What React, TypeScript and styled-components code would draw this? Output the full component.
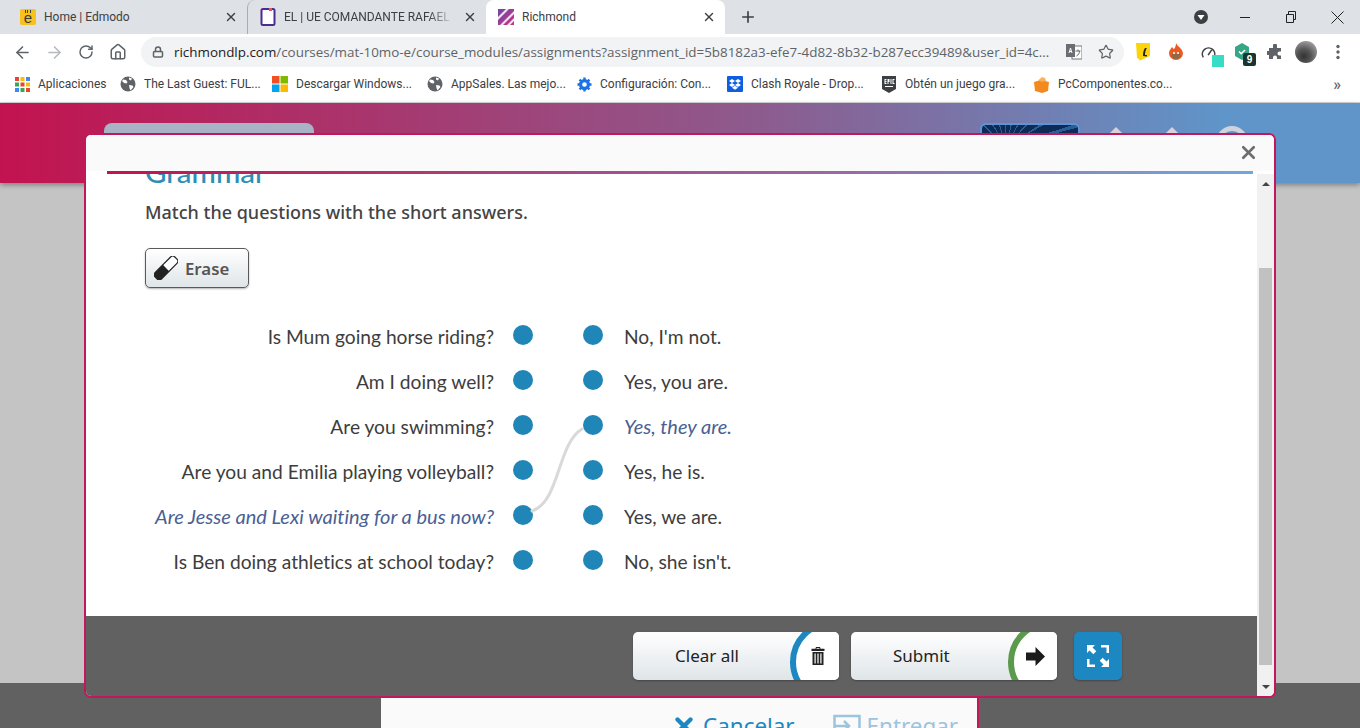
import React from 'react';
import styled, { createGlobalStyle } from 'styled-components';
import { ArrowLeft, ArrowRight, House, Lock, Plus, RotateCw, Star, X } from 'lucide-react';

const GlobalStyle = createGlobalStyle`
  html, body {
    margin: 0;
    padding: 0;
    height: 100%;
    overflow: hidden;
  }
  * {
    box-sizing: border-box;
  }
`;

const chromeFont = `Roboto, "Open Sans", sans-serif`;
const bodyFont = `Lato, "Open Sans", sans-serif`;
const uiFont = `"Noto Sans", "Open Sans", sans-serif`;

const questions = [
  { text: 'Is Mum going horse riding?' },
  { text: 'Am I doing well?' },
  { text: 'Are you swimming?' },
  { text: 'Are you and Emilia playing volleyball?' },
  { text: 'Are Jesse and Lexi waiting for a bus now?', picked: true },
  { text: 'Is Ben doing athletics at school today?' },
];

const answers = [
  { text: "No, I'm not." },
  { text: 'Yes, you are.' },
  { text: 'Yes, they are.', picked: true },
  { text: 'Yes, he is.' },
  { text: 'Yes, we are.' },
  { text: "No, she isn't." },
];

const bookmarks = [
  { label: 'The Last Guest: FUL...', icon: 'globe', width: 152 },
  { label: 'Descargar Windows...', icon: 'windows', width: 155 },
  { label: 'AppSales. Las mejo...', icon: 'globe', width: 150 },
  { label: 'Configuración: Con...', icon: 'gear', width: 150 },
  { label: 'Clash Royale - Drop...', icon: 'dropbox', width: 154 },
  { label: 'Obtén un juego gra...', icon: 'epic', width: 152 },
  { label: 'PcComponentes.co...', icon: 'pc', width: 152 },
];

const BookmarkIcon: React.FC<{ kind: string }> = ({ kind }) => {
  if (kind === 'globe') {
    return (
      <svg width="16" height="16" viewBox="0 0 16 16">
        <circle cx="8" cy="8" r="7.5" fill="#5f6368" />
        <path d="M3 3.5l3 .5 1.5 2-1 1.5-2.500-.5-2-2zM9 9l3.500.5 1 1.500-3 3.500-1-2.500zM9 1.500l3 1-1 2-2-1z" fill="#fff" />
      </svg>
    );
  }
  if (kind === 'windows') {
    return (
      <svg width="16" height="16" viewBox="0 0 16 16">
        <rect width="7.500" height="7.500" fill="#f25022" />
        <rect x="8.500" width="7.500" height="7.500" fill="#7fba00" />
        <rect y="8.500" width="7.500" height="7.500" fill="#00a4ef" />
        <rect x="8.500" y="8.500" width="7.500" height="7.500" fill="#ffb900" />
      </svg>
    );
  }
  if (kind === 'gear') {
    return (
      <svg width="15" height="15" viewBox="0 0 16 16">
        <circle cx="8" cy="8" r="4.200" fill="none" stroke="#1a73e8" strokeWidth="3.400" />
        <path d="M8 .5v3M8 12.500v3M.5 8h3M12.500 8h3M2.700 2.700l2.100 2.100M11.200 11.200l2.100 2.100M2.700 13.300l2.100-2.100M11.200 4.800l2.100-2.100" stroke="#1a73e8" strokeWidth="2.600" />
      </svg>
    );
  }
  if (kind === 'dropbox') {
    return (
      <svg width="16" height="16" viewBox="0 0 16 16">
        <rect width="16" height="16" rx="1" fill="#0d5fe0" />
        <path d="M5 3l3 2-3 2-3-2zM11 3l3 2-3 2-3-2zM5 7l3 2-3 2-3-2zM11 7l3 2-3 2-3-2zM5 11.700l3-2 3 2-3 2z" fill="#fff" />
      </svg>
    );
  }
  if (kind === 'epic') {
    return (
      <svg width="16" height="17" viewBox="0 0 16 17">
        <path d="M1 0h14v13l-7 4-7-4z" fill="#3c4043" />
        <path d="M3.500 3h2v1h-1v1h1v1h-1v1h1v1h-2zM6.500 3h2v3h-1v2h-1zM9.500 3h1v5h-1zM11.500 3h2v1h-1v3h1v1h-2zM4 10h8v1H4z" fill="#fff" />
      </svg>
    );
  }
  return (
    <svg width="17" height="17" viewBox="0 0 17 17">
      <path d="M1 6l7-2 8 2-1 9-6 2-7-2z" fill="#f28a1e" />
      <path d="M5 4.500L9 1l3 1 1 3-4.500.8z" fill="#f9b15c" />
    </svg>
  );
};

const AppsGrid: React.FC = () => {
  const colours = ['#ea4335', '#fbbc04', '#4285f4', '#34a853', '#ea4335', '#fbbc04', '#4285f4', '#34a853', '#ea4335'];
  return (
    <svg width="15" height="15" viewBox="0 0 15 15">
      {colours.map((c, i) => (
        <rect key={i} x={(i % 3) * 5.5} y={Math.floor(i / 3) * 5.5} width="4" height="4" fill={c} />
      ))}
    </svg>
  );
};

const EraserIcon: React.FC = () => (
  <svg width="24" height="24" viewBox="0 0 24 24">
    <g transform="rotate(45 12 12)">
      <rect x="7.500" y="-2" width="9" height="28" rx="3" fill="#fff" stroke="#222" strokeWidth="1.200" />
      <path d="M7.500 12h9v11a3 3 0 0 1-3 3h-3a3 3 0 0 1-3-3z" fill="#222" />
    </g>
  </svg>
);

const TrashIcon: React.FC = () => (
  <svg width="14" height="18" viewBox="0 0 14 18">
    <path d="M5 0h4l.6 1.800H13.500V4H.5V1.800H4.400zM5.600.9l-.2.9h3.200L8.400.900z" fill="#222" fillRule="evenodd" />
    <path d="M1.500 5h11v13h-11zM3.500 6.500v10h1.200v-10zM6.400 6.500v10h1.200v-10zM9.300 6.500v10h1.200v-10z" fill="#222" fillRule="evenodd" />
  </svg>
);

const NextIcon: React.FC = () => (
  <svg width="19" height="19" viewBox="0 0 19 19">
    <path d="M0 5.500h9.500V0L19 9.500 9.500 19v-5.500H0z" fill="#1c1c1c" />
  </svg>
);

const ExpandIcon: React.FC = () => (
  <svg width="24" height="24" viewBox="0 0 24 24" fill="#fff">
    <path d="M1 1h8L6.500 3.500l3.800 3.800-3 3-3.800-3.800L1 9z" />
    <path d="M15 1h8v8h-2.500V3.500H15z" />
    <path d="M1 15h2.500v5.500H9V23H1z" />
    <path d="M23 23h-8l2.500-2.500-3.800-3.800 3-3 3.800 3.800L23 15z" />
  </svg>
);

const App: React.FC = () => {
  return (
    <Screen>
      <GlobalStyle />
      <TabStrip>
        <Tab>
          <EdmodoIcon>e</EdmodoIcon>
          <TabTitle>Home | Edmodo</TabTitle>
          <TabClose><X size={14} strokeWidth={2.4} /></TabClose>
        </Tab>
        <Tab $divider>
          <svg width="16" height="18" viewBox="0 0 16 18">
            <rect x="1.500" y="1" width="13" height="16" rx="1.500" fill="#fff" stroke="#4a2c8f" strokeWidth="2" />
            <rect x="9" y="0" width="3" height="3" fill="#e0584f" />
          </svg>
          <TabTitle $fade>EL | UE COMANDANTE RAFAEL ARIZAGA</TabTitle>
          <TabClose><X size={14} strokeWidth={2.4} /></TabClose>
        </Tab>
        <Tab $active>
          <svg width="16" height="16" viewBox="0 0 16 16">
            <defs>
              <linearGradient id="richmondMark" x1="0" y1="0" x2="1" y2="1">
                <stop offset="0" stopColor="#6a4aa8" />
                <stop offset="1" stopColor="#d0307e" />
              </linearGradient>
            </defs>
            <rect width="16" height="16" fill="url(#richmondMark)" />
            <path d="M0 8L8 0h3L0 11zM2 16L16 2v3L5 16zM9 16l7-7v3l-4 4z" fill="#efe4f3" />
          </svg>
          <TabTitle>Richmond</TabTitle>
          <TabClose><X size={14} strokeWidth={2.4} /></TabClose>
        </Tab>
        <NewTab><Plus size={18} strokeWidth={2.2} /></NewTab>
        <WindowControls>
          <ProfileDrop>
            <svg width="16" height="16" viewBox="0 0 16 16">
              <circle cx="8" cy="8" r="7" fill="#3c4043" />
              <path d="M4.500 6h7L8 11z" fill="#fff" />
            </svg>
          </ProfileDrop>
          <WindowButton>
            <svg width="12" height="12" viewBox="0 0 12 12"><path d="M1 6.500h10" stroke="#222" /></svg>
          </WindowButton>
          <WindowButton>
            <svg width="12" height="12" viewBox="0 0 12 12" fill="none" stroke="#222"><path d="M1.500 3.500h7v8h-7zM3.500 3.500V.5h7v8H8.500" /></svg>
          </WindowButton>
          <WindowButton>
            <svg width="13" height="13" viewBox="0 0 13 13"><path d="M.5.5l12 12M12.500.5l-12 12" stroke="#222" /></svg>
          </WindowButton>
        </WindowControls>
      </TabStrip>

      <Toolbar>
        <NavButton><ArrowLeft size={19} strokeWidth={2} color="#5f6368" /></NavButton>
        <NavButton><ArrowRight size={19} strokeWidth={2} color="#b6b9bd" /></NavButton>
        <NavButton><RotateCw size={16} strokeWidth={2.2} color="#5f6368" /></NavButton>
        <NavButton><House size={18} strokeWidth={2} color="#5f6368" /></NavButton>
        <Omnibox>
          <Lock size={12} strokeWidth={3} color="#5f6368" />
          <Url>
            <b>richmondlp.com</b>/courses/mat-10mo-e/course_modules/assignments?assignment_id=5b8182a3-efe7-4d82-8b32-b287ecc39489&amp;user_id=4c...
          </Url>
          <OmniIcons>
            <svg width="16" height="16" viewBox="0 0 16 16">
              <rect x="6" y="2" width="10" height="13" fill="#fff" stroke="#777" />
              <rect x="0" y="0" width="9" height="13" fill="#6a6e73" />
              <path d="M3 9l1.500-5L6 9M3.500 7.500h2" stroke="#fff" fill="none" />
              <path d="M9.500 7h5M12 5.500V7M10.500 12c2-1 3-3 3-5" stroke="#666" fill="none" />
            </svg>
            <Star size={16} strokeWidth={1.8} color="#5f6368" />
          </OmniIcons>
        </Omnibox>
        <Extensions>
          <Extension>
            <svg width="14" height="18" viewBox="0 0 14 18">
              <path d="M0 0h14v13L4 17.500l-3-3z" fill="#fbd40c" />
              <path d="M7 13c0-3 .5-6 2-8h1.800C9.500 7 9 10 9 12h2v1.500z" fill="#222" />
            </svg>
          </Extension>
          <Extension>
            <svg width="16" height="18" viewBox="0 0 16 18">
              <path d="M8 0c1 3 6 5 7 10a7 7 0 0 1-14 0c0-3 2-4 3-6 1 1 1 2 2 2 1-1 2-3 2-6z" fill="#ec5a24" />
              <path d="M3.500 12a4.500 4 0 0 0 9 0c0-2-2-2-4.500-1s-4.500-1-4.500 1z" fill="#8a6a4a" />
              <circle cx="6" cy="10" r="1" fill="#fff" />
              <circle cx="10" cy="10" r="1" fill="#fff" />
            </svg>
          </Extension>
          <Extension>
            <BadgeWrap>
              <svg width="16" height="15" viewBox="0 0 18 16" fill="none" stroke="#3c4043" strokeWidth="1.800">
                <path d="M2.500 13.500a7 7 0 1 1 12 0" />
                <path d="M8 11l4-6" />
              </svg>
              <GaugeBadge />
            </BadgeWrap>
          </Extension>
          <Extension>
            <BadgeWrap>
              <svg width="16" height="18" viewBox="0 0 16 18">
                <path d="M8 0l7 4v9l-7 4-7-4V4z" fill="#37a586" />
                <path d="M5 8.500l2.200 2.200L11 7" stroke="#fff" strokeWidth="1.500" fill="none" />
              </svg>
              <CountBadge>9</CountBadge>
            </BadgeWrap>
          </Extension>
          <Extension>
            <svg width="16" height="16" viewBox="0 0 16 16">
              <path d="M6 1.500a2 2 0 0 1 4 0V4h4v3.500h-1.500a2 2 0 0 0 0 4H14V15H10v-1.500a2 2 0 0 0-4 0V15H2v-4H.5a2 2 0 0 1 0-4H2V4h4z" fill="#5f6368" />
            </svg>
          </Extension>
          <Avatar />
          <Extension>
            <svg width="4" height="16" viewBox="0 0 4 16" fill="#5f6368">
              <circle cx="2" cy="2.500" r="1.700" />
              <circle cx="2" cy="8" r="1.700" />
              <circle cx="2" cy="13.500" r="1.700" />
            </svg>
          </Extension>
        </Extensions>
      </Toolbar>

      <BookmarkBar>
        <Bookmark $width={105}>
          <AppsGrid />
          <BookmarkLabel>Aplicaciones</BookmarkLabel>
        </Bookmark>
        {bookmarks.map((b) => (
          <Bookmark key={b.label} $width={b.width}>
            <BookmarkIcon kind={b.icon} />
            <BookmarkLabel>{b.label}</BookmarkLabel>
          </Bookmark>
        ))}
        <MoreBookmarks>»</MoreBookmarks>
      </BookmarkBar>

      <Page>
        <SiteHeader>
          <SearchPill />
          <HeaderRight>
            <Thumbnail />
            <Triangle />
            <Triangle />
            <RoundIcon />
          </HeaderRight>
        </SiteHeader>
        <PageBody />
        <PageFoot>
          <BackCard>
            <BackAction>
              <X size={26} strokeWidth={4} color="#1d87c1" />
              Cancelar
            </BackAction>
            <BackAction $faded>
              <svg width="28" height="24" viewBox="0 0 28 24" fill="none" stroke="#9cc4dd" strokeWidth="2.500">
                <path d="M1.500 14V2h25v20H6" />
                <path d="M1 12h14M11 7l5 5-5 5" />
              </svg>
              Entregar
            </BackAction>
          </BackCard>
        </PageFoot>

        <Modal>
          <ModalHeader>
            <CloseModal><X size={21} strokeWidth={3} color="#6d6d6d" /></CloseModal>
          </ModalHeader>
          <GradientRule />
          <ModalBody>
            <ModalMain>
              <Exercise>
                <Title>Grammar</Title>
                <Instruction>Match the questions with the short answers.</Instruction>
                <EraseButton>
                  <EraserIcon />
                  <EraseLabel>Erase</EraseLabel>
                </EraseButton>
                <MatchList>
                  <Connector width="70" height="90" viewBox="0 0 70 90" fill="none">
                    <path d="M10 87 C 38 78, 35 20, 60 5" stroke="#d9d9d9" strokeWidth="3" strokeLinecap="round" />
                  </Connector>
                  {questions.map((q, i) => (
                    <MatchRow key={q.text}>
                      <Question $picked={q.picked}>{q.text}</Question>
                      <DotPair>
                        <Dot />
                        <Dot />
                      </DotPair>
                      <Answer $picked={answers[i].picked}>{answers[i].text}</Answer>
                    </MatchRow>
                  ))}
                </MatchList>
              </Exercise>
              <ModalFooter>
                <ActionButton $ring="#1d87c1">
                  <ActionLabel>Clear all</ActionLabel>
                  <ActionIcon><TrashIcon /></ActionIcon>
                </ActionButton>
                <ActionButton $ring="#5b9a4a">
                  <ActionLabel>Submit</ActionLabel>
                  <ActionIcon><NextIcon /></ActionIcon>
                </ActionButton>
                <ExpandButton><ExpandIcon /></ExpandButton>
              </ModalFooter>
            </ModalMain>
            <Scrollbar>
              <ScrollArrow $up />
              <ScrollThumb />
              <ScrollArrow />
            </Scrollbar>
          </ModalBody>
        </Modal>
      </Page>
    </Screen>
  );
};
export default App;

const Screen = styled.div`
  display: flex;
  flex-direction: column;
  width: 1360px;
  height: 728px;
  overflow: hidden;
  background: #fff;
  font-family: ${chromeFont};
`;

const TabStrip = styled.header`
  display: flex;
  align-items: stretch;
  flex: none;
  height: 34px;
  padding-left: 8px;
  background: #dee1e6;
`;

const Tab = styled.div<{ $active?: boolean; $divider?: boolean }>`
  position: relative;
  display: flex;
  align-items: center;
  gap: 8px;
  width: 239px;
  padding: 0 8px 0 12px;
  border-radius: 8px 8px 0 0;
  background: ${(p) => (p.$active ? '#fff' : 'transparent')};
  border-left: ${(p) => (p.$divider ? '1px solid #a9acb1' : '0')};
  background-clip: padding-box;
`;

const EdmodoIcon = styled.span`
  position: relative;
  display: flex;
  align-items: flex-end;
  justify-content: center;
  width: 16px;
  height: 16px;
  background: #f8c21c;
  border-radius: 2px;
  color: #3b3b3b;
  font: 400 15px/14px "Liberation Sans", sans-serif;

  &::before {
    content: '';
    position: absolute;
    top: 1px;
    left: 5px;
    width: 6px;
    height: 3px;
    background: repeating-linear-gradient(to right, #3b3b3b 0 1px, transparent 1px 2.500px);
  }
`;

const TabTitle = styled.span<{ $fade?: boolean }>`
  flex: 1;
  overflow: hidden;
  white-space: nowrap;
  font-size: 12px;
  color: #3c4043;
  ${(p) => p.$fade && 'mask-image: linear-gradient(to right, #000 85%, transparent 100%);'}
`;

const TabClose = styled.span`
  display: flex;
  justify-content: center;
  width: 16px;
  color: #3c4043;
`;

const NewTab = styled.span`
  display: flex;
  align-items: center;
  margin-left: 14px;
  color: #3c4043;
`;

const WindowControls = styled.div`
  display: flex;
  align-items: center;
  margin-left: auto;
`;

const ProfileDrop = styled.span`
  display: flex;
  margin-right: 13px;
`;

const WindowButton = styled.span`
  display: flex;
  align-items: center;
  justify-content: center;
  width: 46px;
  height: 30px;
`;

const Toolbar = styled.nav`
  display: flex;
  align-items: center;
  flex: none;
  height: 36px;
  padding-left: 6px;
  background: #fff;
`;

const NavButton = styled.span`
  display: flex;
  align-items: center;
  justify-content: center;
  flex: none;
  width: 32px;
  height: 30px;
`;

const Omnibox = styled.div`
  display: flex;
  align-items: center;
  flex: none;
  width: 983px;
  height: 30px;
  margin-left: 7px;
  padding: 0 10px 0 11px;
  border-radius: 15px;
  background: #f1f3f4;
`;

const Url = styled.span`
  flex: 1;
  min-width: 0;
  margin-left: 10px;
  overflow: hidden;
  white-space: nowrap;
  font: 400 13.400px/18px "Open Sans", sans-serif;
  color: #5f6368;

  b {
    font-weight: 400;
    color: #202124;
  }
`;

const OmniIcons = styled.span`
  display: flex;
  align-items: center;
  gap: 16px;
  margin-left: 16px;
`;

const Extensions = styled.div`
  display: flex;
  align-items: center;
  flex: none;
  margin-left: 3px;
`;

const Extension = styled.span`
  display: flex;
  align-items: center;
  justify-content: center;
  width: 32px;
  height: 30px;
  margin-right: 1px;
`;

const BadgeWrap = styled.span`
  position: relative;
  display: flex;
`;

const GaugeBadge = styled.span`
  position: absolute;
  right: -7px;
  bottom: -7px;
  width: 12px;
  height: 12px;
  background: #37dcc6;
`;

const CountBadge = styled.span`
  position: absolute;
  right: -6px;
  bottom: -5px;
  width: 13px;
  height: 13px;
  border-radius: 2px;
  background: #17362f;
  color: #fff;
  text-align: center;
  font: 700 10px/13px "Liberation Sans", sans-serif;
`;

const Avatar = styled.span`
  width: 22px;
  height: 22px;
  margin: 0 5px 0 3px;
  border-radius: 50%;
  background: radial-gradient(circle at 40% 70%, #333 0, #555 35%, #999 75%);
`;

const BookmarkBar = styled.div`
  display: flex;
  align-items: center;
  flex: none;
  height: 33px;
  padding: 0 0 4px 15px;
  background: #fff;
  border-bottom: 1px solid #d6d8db;
`;

const Bookmark = styled.span<{ $width: number }>`
  display: flex;
  align-items: center;
  gap: 8px;
  width: ${(p) => p.$width}px;
  flex: none;
  svg {
    flex: none;
  }
`;

const BookmarkLabel = styled.span`
  white-space: nowrap;
  font-size: 12px;
  color: #3c4043;
`;

const MoreBookmarks = styled.span`
  margin-left: auto;
  margin-right: 19px;
  font-size: 16px;
  font-weight: 500;
  color: #5f6368;
`;

const Page = styled.main`
  position: relative;
  display: flex;
  flex-direction: column;
  flex: 1;
  min-height: 0;
`;

const SiteHeader = styled.div`
  position: relative;
  z-index: 1;
  flex: none;
  display: flex;
  justify-content: space-between;
  height: 80px;
  padding: 20px 112px 0 104px;
  background: linear-gradient(to right, #c2134f 0%, #8e5a8d 55%, #5f95c9 90%, #5f95c9 100%);
  box-shadow: 0 2px 5px rgba(0, 0, 0, 0.35);
`;

const SearchPill = styled.div`
  width: 210px;
  height: 40px;
  border-radius: 8px;
  background: #a8b4c6;
`;

const HeaderRight = styled.div`
  display: flex;
  gap: 32px;
`;

const Thumbnail = styled.div`
  width: 100px;
  height: 40px;
  margin-right: -8px;
  border: 2px solid #5f95d4;
  border-radius: 6px;
  background: repeating-conic-gradient(from 0deg at 25% 60%, #0e2a55 0 12deg, #2a5e96 12deg 15deg);
`;

const Triangle = styled.div`
  width: 24px;
  height: 24px;
  margin-top: 4px;
  background: #d9d0dc;
  clip-path: polygon(50% 0, 100% 50%, 0 50%);
`;

const RoundIcon = styled.div`
  width: 32px;
  height: 32px;
  margin-top: 3px;
  border-radius: 50%;
  border: 5px solid #cfd3de;
`;

const PageBody = styled.div`
  flex: 1;
  background: #c3c4c3;
`;

const PageFoot = styled.div`
  flex: none;
  height: 45px;
  padding: 14px 0 0 381px;
  background: #616161;
  overflow: hidden;
`;

const BackCard = styled.div`
  display: flex;
  justify-content: flex-end;
  gap: 38px;
  width: 598px;
  height: 80px;
  padding: 13px 19px 0 0;
  background: #fafafa;
  border-right: 2px solid #c2185b;
`;

const BackAction = styled.span<{ $faded?: boolean }>`
  display: flex;
  align-items: center;
  align-self: flex-start;
  gap: 6px;
  height: 32px;
  font: 400 22.400px/32px ${uiFont};
  color: ${(p) => (p.$faded ? '#9cc4dd' : '#1d87c1')};
`;

const Modal = styled.section`
  position: absolute;
  z-index: 2;
  left: 84px;
  top: 30px;
  display: flex;
  flex-direction: column;
  width: 1192px;
  height: 565px;
  border: 2px solid #c2185b;
  border-radius: 7px;
  background: #fff;
  overflow: hidden;
`;

const ModalHeader = styled.div`
  position: relative;
  flex: none;
  height: 36px;
  background: #fafafa;
`;

const CloseModal = styled.span`
  position: absolute;
  right: 15px;
  top: 7px;
  display: flex;
`;

const GradientRule = styled.div`
  flex: none;
  height: 3px;
  margin: 0 21px;
  background: linear-gradient(to right, #c2134f 0%, #9a6aa8 65%, #6fa8dc 100%);
`;

const ModalBody = styled.div`
  display: flex;
  flex: 1;
  min-height: 0;
`;

const ModalMain = styled.div`
  display: flex;
  flex-direction: column;
  flex: 1;
  min-width: 0;
`;

const Exercise = styled.div`
  flex: 1;
  min-height: 0;
  overflow: hidden;
  padding-left: 59px;
`;

const Title = styled.h2`
  margin: -17px 0 0;
  height: 30px;
  font: 500 29.500px/30px ${bodyFont};
  color: #2e8db5;
`;

const Instruction = styled.p`
  margin: 13px 0 0;
  font: 500 18px/24px ${uiFont};
  color: #444;
`;

const EraseButton = styled.button`
  display: flex;
  align-items: center;
  gap: 7px;
  flex: none;
  width: 104px;
  height: 40px;
  margin-top: 24px;
  padding: 0 0 0 8px;
  border: 1px solid #5a5a5a;
  border-radius: 5px;
  background: linear-gradient(to bottom, #fff, #dfe5e8);
  box-shadow: 0 1px 2px rgba(0, 0, 0, 0.3);
`;

const EraseLabel = styled.span`
  padding-top: 1px;
  font: 600 16.800px/24px ${uiFont};
  color: #555;
`;

const MatchList = styled.div`
  position: relative;
  margin-top: 24px;
`;

const Connector = styled.svg`
  position: absolute;
  left: 377px;
  top: 112px;
`;

const MatchRow = styled.div`
  display: flex;
  align-items: center;
  height: 45px;
`;

const rowText = (picked?: boolean) => `
  font: ${picked ? 'italic 400 20px' : '400 19.200px'}/24px ${bodyFont};
  font-variant-ligatures: none;
  color: ${picked ? '#4a5f94' : '#3d3d3d'};
  padding-top: ${picked ? 3 : 4}px;
  white-space: nowrap;
`;

const Question = styled.span<{ $picked?: boolean }>`
  ${(p) => rowText(p.$picked)}
  flex: none;
  width: 349px;
  text-align: right;
`;

const DotPair = styled.span`
  display: flex;
  flex: none;
  gap: 50px;
  margin: 0 21px 0 19px;
`;

const Dot = styled.span`
  width: 20px;
  height: 20px;
  border-radius: 50%;
  background: #1f86b7;
`;

const Answer = styled.span<{ $picked?: boolean }>`
  ${(p) => rowText(p.$picked)}
`;

const ModalFooter = styled.div`
  flex: none;
  display: flex;
  align-items: flex-start;
  gap: 12px;
  height: 80px;
  padding: 16px 0 0 547px;
  background: #616161;
`;

const ActionButton = styled.button<{ $ring: string }>`
  position: relative;
  display: flex;
  align-items: center;
  flex: none;
  width: 206px;
  height: 48px;
  padding: 0 0 0 42px;
  border: 0;
  border-radius: 5px;
  overflow: hidden;
  background: linear-gradient(to bottom, #fff, #dfe5e8);
  box-shadow: 0 1px 2px rgba(0, 0, 0, 0.3);

  &::after {
    content: '';
    position: absolute;
    left: 157px;
    top: -12px;
    width: 72px;
    height: 72px;
    border: 6px solid ${(p) => p.$ring};
    border-radius: 50%;
    background: #fff;
  }
`;

const ActionLabel = styled.span`
  font: 400 17px/24px ${uiFont};
  color: #222;
`;

const ActionIcon = styled.span`
  position: absolute;
  z-index: 1;
  right: 12px;
  top: 15px;
  display: flex;
  justify-content: center;
  width: 19px;
`;

const ExpandButton = styled.button`
  display: flex;
  align-items: center;
  justify-content: center;
  flex: none;
  width: 48px;
  height: 48px;
  margin-left: 5px;
  padding: 0;
  border: 0;
  border-radius: 5px;
  background: #1d87c1;
  box-shadow: 0 1px 2px rgba(0, 0, 0, 0.3);
`;

const Scrollbar = styled.div`
  flex: none;
  display: flex;
  flex-direction: column;
  align-items: center;
  width: 17px;
  padding-top: 1px;
  background: #f1f1f1;
`;

const ScrollArrow = styled.span<{ $up?: boolean }>`
  flex: none;
  width: 0;
  height: 0;
  margin: 7px 0 6px;
  border-left: 4px solid transparent;
  border-right: 4px solid transparent;
  ${(p) => (p.$up ? 'border-bottom: 4px solid #444;' : 'border-top: 4px solid #444;')}
`;

const ScrollThumb = styled.div`
  flex: none;
  width: 13px;
  height: 397px;
  margin: 76px 0 13px;
  background: #c1c1c1;
`;
